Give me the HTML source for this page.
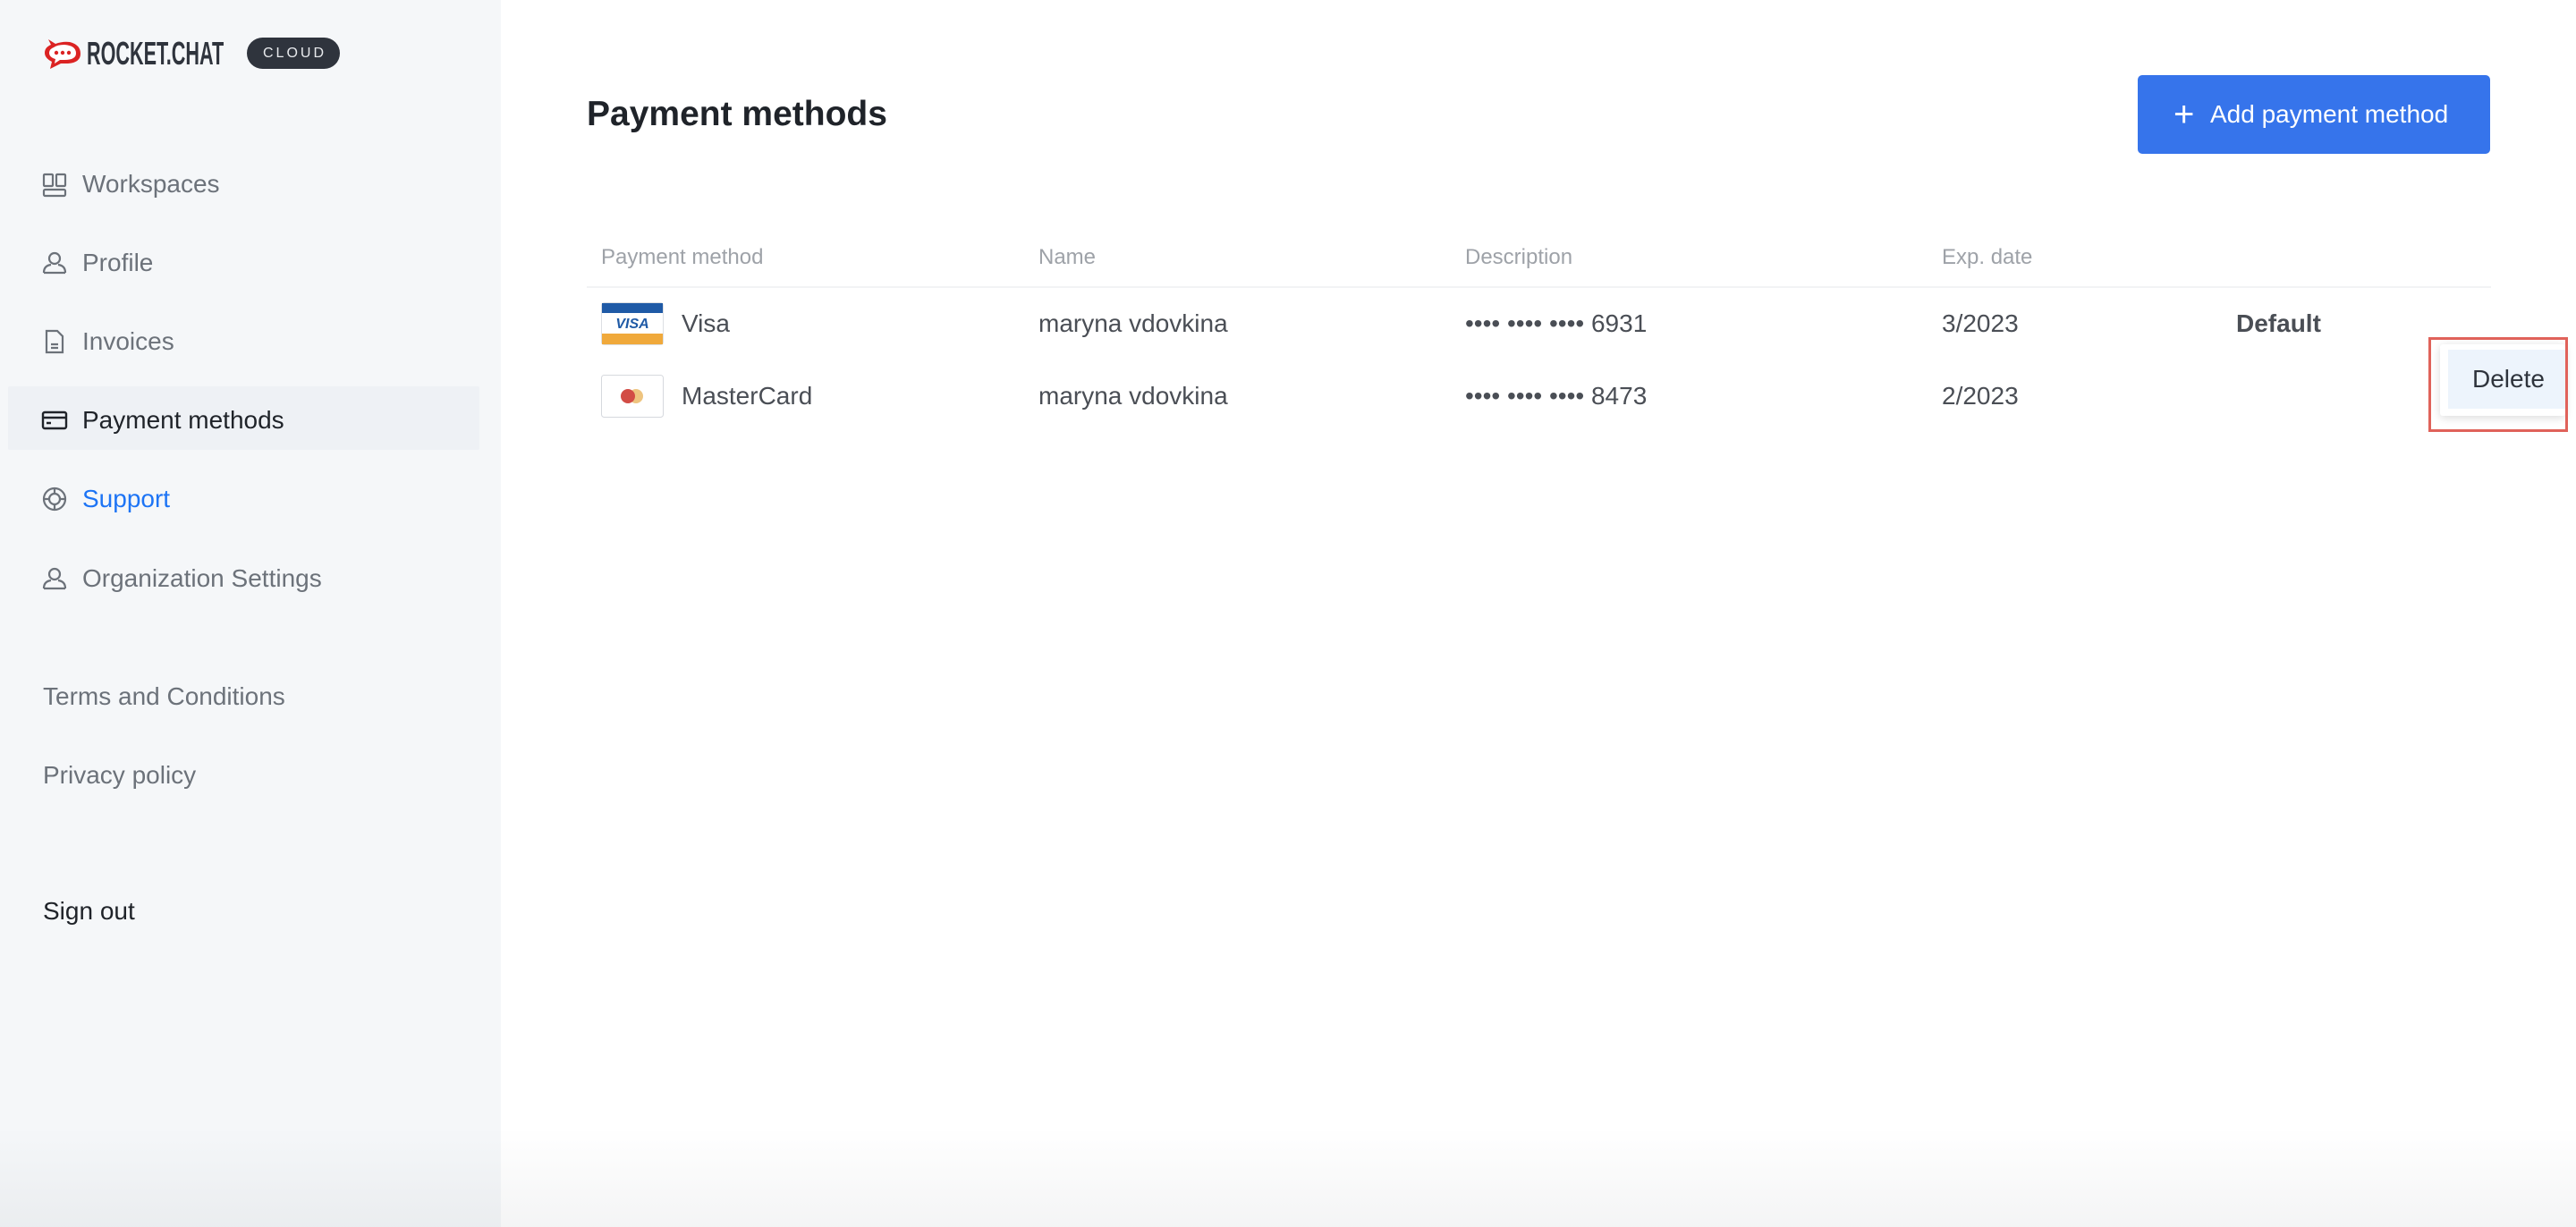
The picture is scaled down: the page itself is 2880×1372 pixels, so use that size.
<!DOCTYPE html>
<html><head><meta charset="utf-8"><style>
*{margin:0;padding:0;box-sizing:border-box}
body{width:2880px;height:1372px;overflow:hidden;background:#fff;font-family:"Liberation Sans",sans-serif;position:relative}
.side{position:absolute;left:0;top:0;width:560px;height:1372px;background:#f5f7f9}
.abs{position:absolute;white-space:nowrap}
.nav{position:absolute;left:92px;font-size:28px;color:#6c727a;line-height:34px}
.ico{position:absolute;left:46px}
.th{position:absolute;top:274px;font-size:24px;color:#9ea2a8;line-height:28px}
.td{position:absolute;font-size:28px;color:#4a4e55;line-height:34px;font-weight:500}
</style></head><body>
<div class="side">
 <svg class="abs" style="left:48px;top:42px" width="44" height="36" viewBox="0 0 44 36">
  <path d="M6 2 L14 7 Q22 4 30 5 Q42 8 42 18 Q42 28 28 29 L20 29 L8 35 L10 27 Q2 23 2 17 Q2 11 9 8 Z" fill="#db2323"/>
  <path d="M12 11 Q16 8 24 8 Q37 9 37 17.5 Q37 25 24 25 L19 25 L13 29 L14 24 Q7 22 7 17 Q7 13 12 11Z" fill="#fff"/>
  <circle cx="15" cy="17" r="2.2" fill="#db2323"/><circle cx="22" cy="17" r="2.2" fill="#db2323"/><circle cx="29" cy="17" r="2.2" fill="#db2323"/>
 </svg>
 <div class="abs" style="left:97px;top:40px;font-size:36px;font-weight:700;color:#2f343d;line-height:40px;transform:scaleX(0.6);transform-origin:left center">ROCKET.CHAT</div>
 <div class="abs" style="left:276px;top:42px;width:104px;height:35px;border-radius:18px;background:#2f343d;color:#e8eaed;font-size:16px;letter-spacing:3px;text-align:center;line-height:35px;padding-left:3px">CLOUD</div>

 <div class="abs" style="left:9px;top:432px;width:527px;height:71px;background:#eef1f5;border-radius:2px"></div>

 <svg class="ico" style="top:192px" width="30" height="30" viewBox="0 0 30 30" fill="none" stroke="#6c727a" stroke-width="2.2"><rect x="3" y="3" width="10" height="13" rx="1"/><rect x="17" y="3" width="10" height="13" rx="1"/><rect x="3" y="20" width="24" height="7" rx="1.5"/></svg>
 <div class="nav" style="top:189px">Workspaces</div>
 <svg class="ico" style="top:279px" width="30" height="30" viewBox="0 0 30 30" fill="none" stroke="#6c727a" stroke-width="2.2"><circle cx="15" cy="10" r="6"/><path d="M3 26 Q3 18 11 17 M27 26 Q27 18 19 17 M3 26 H27"/></svg>
 <div class="nav" style="top:277px">Profile</div>
 <svg class="ico" style="top:367px" width="30" height="30" viewBox="0 0 30 30" fill="none" stroke="#6c727a" stroke-width="2.2"><path d="M6 3 H18 L24 9 V27 H6 Z"/><path d="M11 18 H19 M11 22 H19"/></svg>
 <div class="nav" style="top:365px">Invoices</div>
 <svg class="ico" style="top:455px" width="30" height="30" viewBox="0 0 30 30" fill="none" stroke="#1f2329" stroke-width="2.4"><rect x="2" y="6" width="26" height="18" rx="2"/><path d="M2 12 H28 M6 18 H11"/></svg>
 <div class="nav" style="top:453px;color:#1f2329">Payment methods</div>
 <svg class="ico" style="top:543px" width="30" height="30" viewBox="0 0 30 30" fill="none" stroke="#6c727a" stroke-width="2.2"><circle cx="15" cy="15" r="12"/><circle cx="15" cy="15" r="6"/><path d="M15 3 V9 M15 21 V27 M3 15 H9 M21 15 H27"/></svg>
 <div class="nav" style="top:541px;color:#1d74f5">Support</div>
 <svg class="ico" style="top:632px" width="30" height="30" viewBox="0 0 30 30" fill="none" stroke="#6c727a" stroke-width="2.2"><circle cx="15" cy="10" r="6"/><path d="M3 26 Q3 18 11 17 M27 26 Q27 18 19 17 M3 26 H27"/></svg>
 <div class="nav" style="top:630px">Organization Settings</div>

 <div class="nav" style="left:48px;top:762px">Terms and Conditions</div>
 <div class="nav" style="left:48px;top:850px">Privacy policy</div>
 <div class="nav" style="left:48px;top:1002px;color:#1f2329">Sign out</div>
</div>

<div class="abs" style="left:656px;top:106px;font-size:39px;font-weight:700;color:#1f2329;line-height:44px">Payment methods</div>
<div class="abs" style="left:2390px;top:84px;width:394px;height:88px;background:#3674eb;border-radius:5px;color:#fff;font-size:28px;line-height:88px">
 <span class="abs" style="left:40px;top:0;font-size:40px;font-weight:300">+</span>
 <span class="abs" style="left:81px;top:0">Add payment method</span>
</div>

<div class="th" style="left:672px">Payment method</div>
<div class="th" style="left:1161px">Name</div>
<div class="th" style="left:1638px">Description</div>
<div class="th" style="left:2171px">Exp. date</div>
<div class="abs" style="left:656px;top:320px;width:2129px;height:2px;background:#f2f3f5"></div>

<svg class="abs" style="left:672px;top:338px" width="70" height="48" viewBox="0 0 70 48"><rect x="0.5" y="0.5" width="69" height="47" rx="3" fill="#fff" stroke="#dcdfe3"/><rect x="1" y="1" width="68" height="11" fill="#1f5aa6"/><rect x="1" y="35" width="68" height="12" fill="#f0a93b"/><text x="35" y="29" text-anchor="middle" font-family="Liberation Sans" font-weight="700" font-style="italic" font-size="16" fill="#1f5aa6">VISA</text></svg>
<div class="td" style="left:762px;top:345px">Visa</div>
<div class="td" style="left:1161px;top:345px">maryna vdovkina</div>
<div class="td" style="left:1638px;top:345px">•••• •••• •••• 6931</div>
<div class="td" style="left:2171px;top:345px">3/2023</div>
<div class="td" style="left:2500px;top:345px;font-weight:700">Default</div>

<svg class="abs" style="left:672px;top:419px" width="70" height="48" viewBox="0 0 70 48"><rect x="0.5" y="0.5" width="69" height="47" rx="3" fill="#fff" stroke="#d6d9de"/><circle cx="39" cy="24" r="8" fill="#eec47f"/><circle cx="30" cy="24" r="8" fill="#d24c45"/></svg>
<div class="td" style="left:762px;top:426px">MasterCard</div>
<div class="td" style="left:1161px;top:426px">maryna vdovkina</div>
<div class="td" style="left:1638px;top:426px">•••• •••• •••• 8473</div>
<div class="td" style="left:2171px;top:426px">2/2023</div>

<div class="abs" style="left:2728px;top:385px;width:140px;height:80px;background:#fff;box-shadow:0 2px 10px rgba(0,0,0,.15);border-radius:3px"></div>
<div class="abs" style="left:2737px;top:391px;width:131px;height:66px;background:#edf4fc;font-size:28px;color:#2f343d;line-height:66px;padding-left:27px">Delete</div>
<div class="abs" style="left:2715px;top:377px;width:156px;height:106px;border:3px solid #e0625a"></div>

<div class="abs" style="left:0;top:1260px;width:2880px;height:112px;background:linear-gradient(to bottom,rgba(0,0,0,0),rgba(40,50,60,.05))"></div>
</body></html>
